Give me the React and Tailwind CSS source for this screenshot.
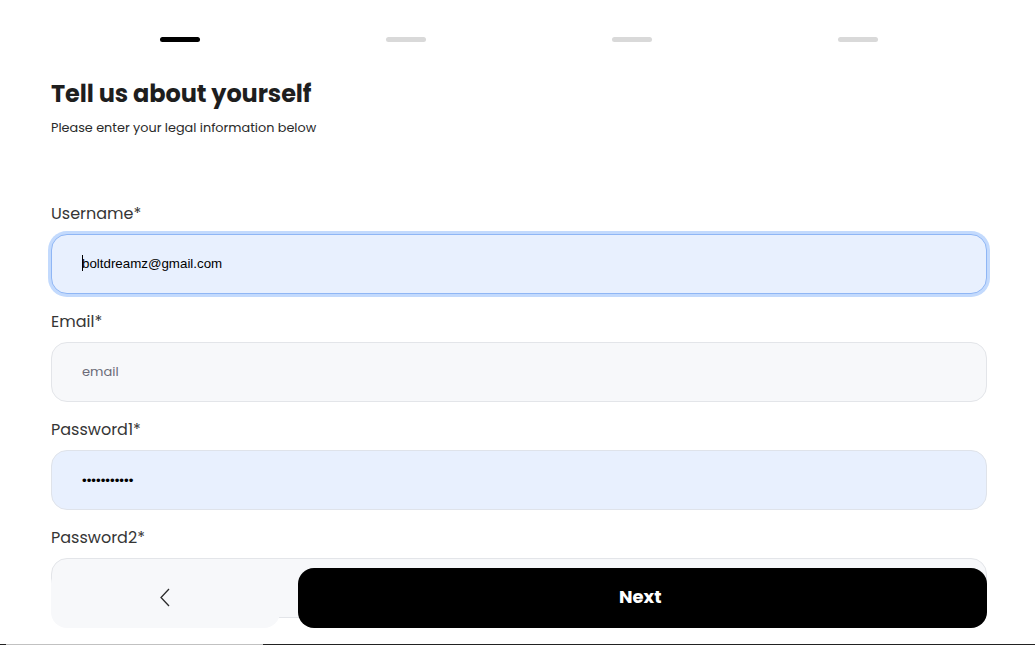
import React from "react";

function Label({ children }) {
  return (
    <div className="h-6 text-[16px] leading-6 text-[#353535] mb-[8px]">{children}</div>
  );
}

export default function App() {
  return (
    <div className="relative flex h-[645px] w-full flex-col overflow-hidden bg-white font-['Poppins','Inter',sans-serif]">
      <div className="flex-1">
        {/* progress */}
        <div className="ml-[67px] flex w-[904px] pt-[37px]">
          <div className="flex flex-1 justify-center"><div className="h-[5px] w-10 rounded-full bg-black" /></div>
          <div className="flex flex-1 justify-center"><div className="h-[5px] w-10 rounded-full bg-[#d9d9d9]" /></div>
          <div className="flex flex-1 justify-center"><div className="h-[5px] w-10 rounded-full bg-[#d9d9d9]" /></div>
          <div className="flex flex-1 justify-center"><div className="h-[5px] w-10 rounded-full bg-[#d9d9d9]" /></div>
        </div>

        <div className="pl-[51px] pr-[48px]">
          <h1 className="mt-[36px] text-[24px] font-bold leading-8 tracking-[-0.1px] text-[#1e1e1e]">Tell us about yourself</h1>
          <p className="mt-2 text-[12.8px] leading-5 text-[#2a2a2a]">Please enter your legal information below</p>

          <form className="mt-[64px] flex flex-col">
            <Label>Username*</Label>
            <div className="relative mb-[16px]">
              <input
                readOnly
                value="boltdreamz@gmail.com"
                className="h-[60px] w-full rounded-2xl border border-[#8fb6f5] bg-[#e8f0fe] pb-[2px] pl-[30px] font-['Liberation_Sans',Arial,sans-serif] text-[13.33px] text-black outline-none ring-[3px] ring-[#c3dafd]"
              />
              <span className="absolute left-[31px] top-[21px] h-[16px] w-px bg-black" />
            </div>

            <Label>Email*</Label>
            <input
              readOnly
              placeholder="email"
              className="mb-[16px] h-[60px] w-full rounded-2xl border border-[#e3e5e9] bg-[#f7f8fa] pl-[30px] text-[13px] text-black outline-none placeholder:text-[#6b6b78]"
            />

            <Label>Password1*</Label>
            <input
              readOnly
              type="password"
              value="12345678901"
              className="mb-[16px] h-[60px] w-full rounded-2xl border border-[#dfe3ea] bg-[#e8f0fe] pl-[30px] font-['Liberation_Sans',Arial,sans-serif] text-[13.33px] text-black outline-none"
            />

            <Label>Password2*</Label>
            <input
              readOnly
              type="password"
              className="mb-[16px] h-[60px] w-full rounded-2xl border border-[#e3e5e9] bg-[#f7f8fa] pl-[30px] text-[13px] outline-none"
            />
          </form>
        </div>
      </div>

      {/* bottom action bar (fixed over content) */}
      <div className="absolute bottom-[17px] left-[51px] right-[48px] flex gap-[18px]">
        <button className="flex h-[60px] flex-1 items-center justify-center rounded-2xl bg-[#f7f8fa] pb-[2px]">
          <svg width="10" height="19" viewBox="0 0 10 19" fill="none">
            <polyline points="9,1 1,9.5 9,18" stroke="#2b2b2b" strokeWidth="1.3" strokeLinejoin="miter" />
          </svg>
        </button>
        <button className="flex h-[60px] flex-[3] items-center justify-center rounded-2xl bg-black pb-1 pr-1 text-[18px] font-bold text-white">
          Next
        </button>
      </div>

      {/* scrollbar strip */}
      <div className="flex h-px w-full">
        <div className="w-[6px] bg-[#222]" />
        <div className="w-[257px] bg-[#c1c1c1]" />
        <div className="flex-1 bg-[#222]" />
      </div>
    </div>
  );
}
